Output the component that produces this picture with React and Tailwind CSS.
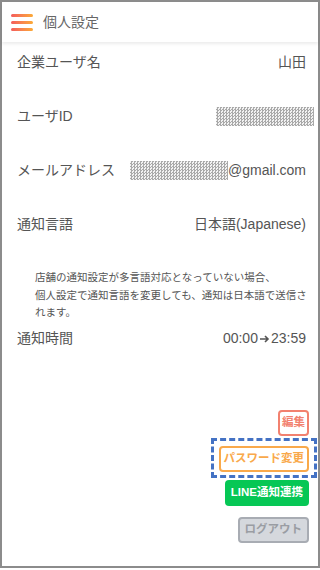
import React from 'react';

const font = { fontFamily: '"Liberation Sans", "Noto Sans CJK JP", sans-serif' };

const Masked = ({ className }) => (
    <span className={`inline-block bg-[repeating-conic-gradient(#a9a9a9_0_25%,#f2f2f2_0_50%)] bg-[length:3px_3px] ${className}`} />
);

const Row = ({ label, children, className = '' }) => (
    <div className={`flex items-center justify-between h-[20px] ${className}`}>
        <span>{label}</span>
        <span className="flex items-center">{children}</span>
    </div>
);

const App = () => {
    return (
        <div style={font} className="w-[320px] h-[568px] border-2 border-[#8c8c8c] bg-white text-[#555] flex flex-col">
            <header className="h-[40px] flex items-center gap-[10px] pl-[9px] shadow-[0_2px_3px_rgba(0,0,0,0.08)]">
                <div className="flex flex-col gap-[4px] w-[22px]">
                    <span className="h-[3px] rounded-sm bg-gradient-to-r from-[#f35b5b] to-[#fba934]" />
                    <span className="h-[3px] rounded-sm bg-gradient-to-r from-[#f35b5b] to-[#fba934]" />
                    <span className="h-[3px] rounded-sm bg-gradient-to-r from-[#f35b5b] to-[#fba934]" />
                </div>
                <h1 className="text-[14px] text-[#666]">個人設定</h1>
            </header>

            <main className="flex flex-col px-[15px] pr-[12px] text-[14px]">
                <Row label="企業ユーザ名" className="mt-[10px]">山田</Row>
                <Row label="ユーザID" className="mt-[34px]">
                    <Masked className="w-[98px] h-[19px] -mr-[8px]" />
                </Row>
                <Row label="メールアドレス" className="mt-[34px]">
                    <Masked className="w-[98px] h-[19px]" />
                    <span>@gmail.com</span>
                </Row>
                <Row label="通知言語" className="mt-[34px]">日本語(Japanese)</Row>

                <p className="mt-[35px] -mr-[6px] pl-[18px] text-[10.5px] leading-[17.5px] text-[#555]">
                    店舗の通知設定が多言語対応となっていない場合、<br />
                    個人設定で通知言語を変更しても、通知は日本語で送信されます。
                </p>

                <Row label="通知時間" className="mt-[7px]">
                    00:00
                    <svg width="11" height="10" viewBox="0 0 11 10" className="mx-[1px]">
                        <path d="M1 5h8M6 2l3 3-3 3" fill="none" stroke="#555" strokeWidth="1.6" />
                    </svg>
                    23:59
                </Row>

                <div className="mt-[61px] -mr-[3px] flex flex-col items-end text-[11.5px] font-bold">
                    <button className="h-[26px] px-[2px] rounded-[4px] border-2 border-[#f2816f] text-[#f2816f] bg-white">編集</button>
                    <div className="mt-[2px] -mr-[8px] px-[5px] pt-[5px] pb-[3px] border-[3px] border-dashed border-[#4472c4]">
                        <button className="h-[26px] px-[3px] rounded-[4px] border-2 border-[#f9a94b] text-[#f9a94b] bg-white">パスワード変更</button>
                    </div>
                    <button className="mt-[2px] h-[26px] px-[6px] rounded-[4px] bg-[#06c755] text-white">LINE通知連携</button>
                    <button className="mt-[11px] h-[26px] px-[5px] rounded-[4px] border-2 border-[#a8acb3] bg-[#d5d8dd] text-[#9a9da3]">ログアウト</button>
                </div>
            </main>
        </div>
    );
};

export default App;
